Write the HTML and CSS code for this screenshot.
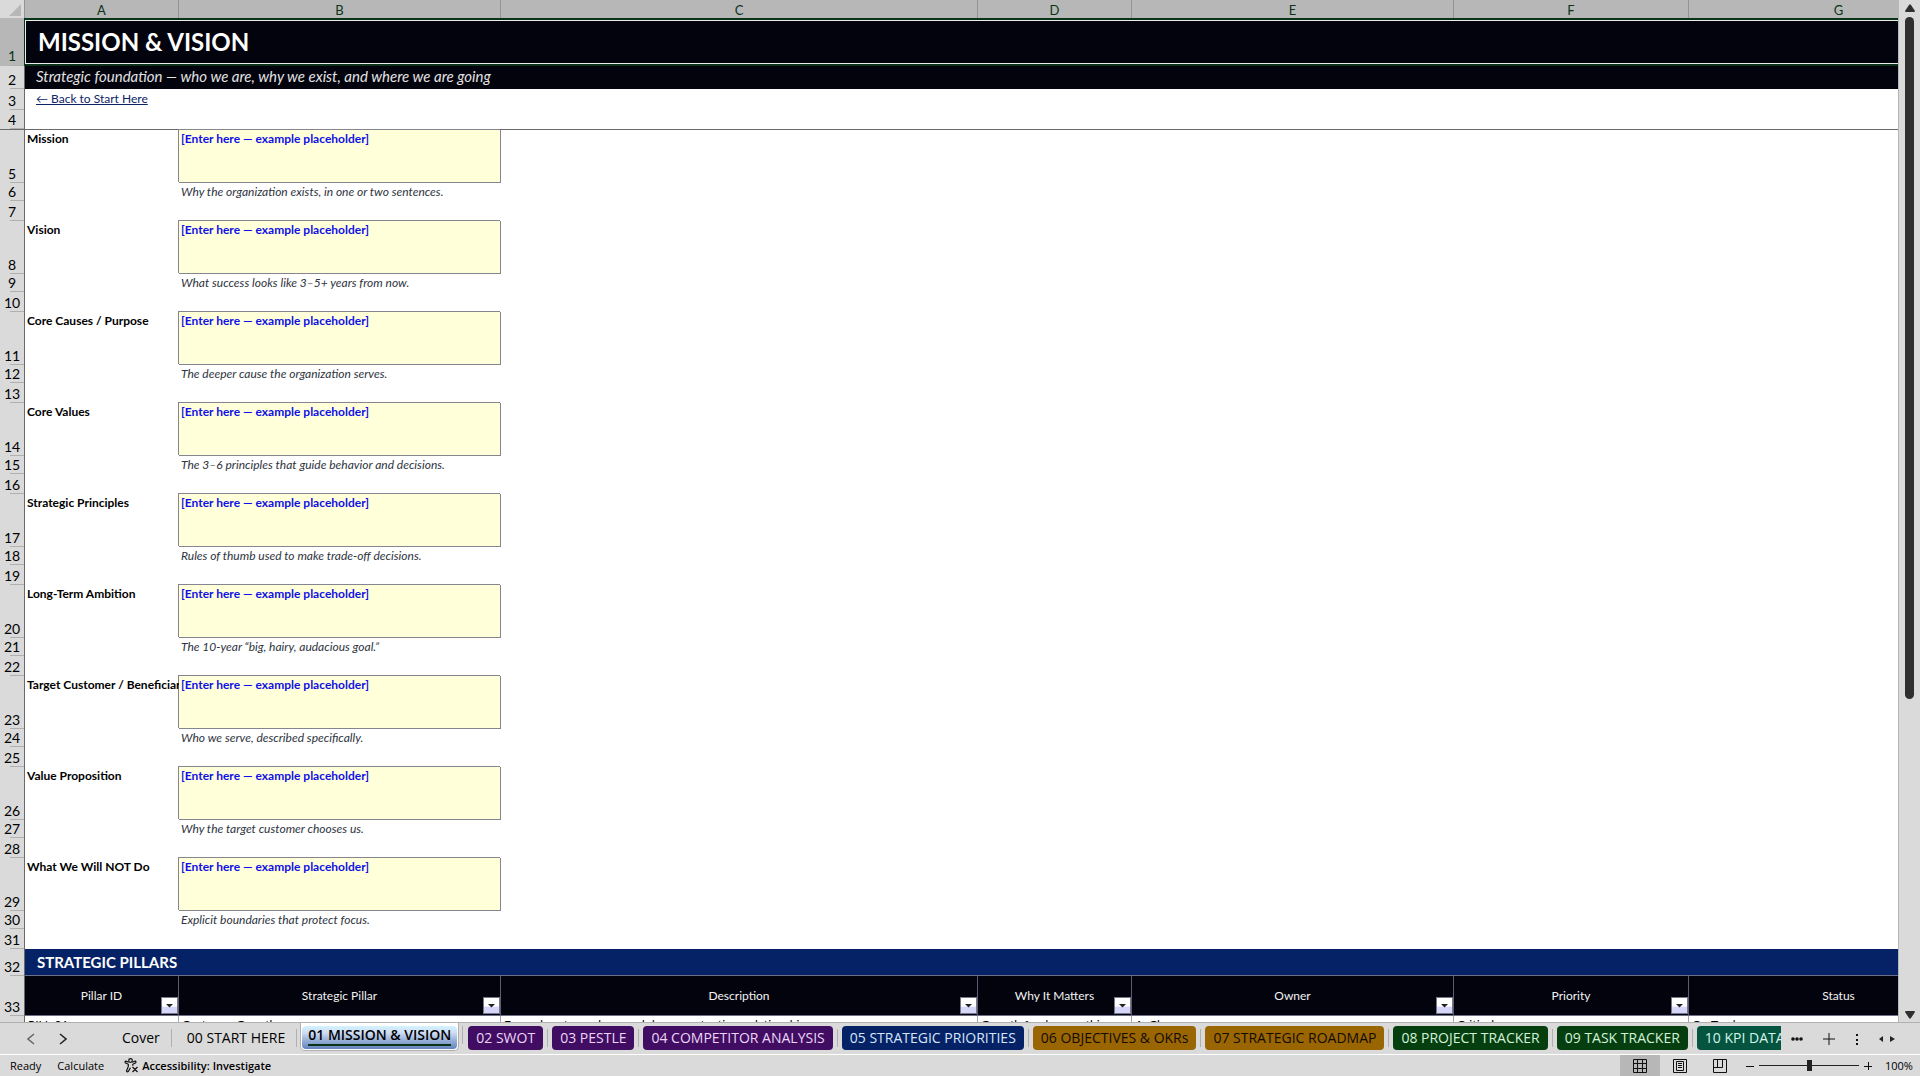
FILE: index.html
```
<!DOCTYPE html>
<html lang="en">
<head>
    <meta charset="UTF-8">
    <meta name="viewport" content="width=device-width, initial-scale=1.0">
    <title>Mission &amp; Vision</title>
    <link rel="stylesheet" href="styles.css">
</head>
<body>
    <main class="workspace">
        <div class="sheet">
            <table class="grid">
                <colgroup>
                    <col class="col-head"><col class="col-a"><col class="col-b"><col class="col-c"><col class="col-d"><col class="col-e"><col class="col-f"><col class="col-g">
                </colgroup>
                <thead>
                    <tr class="letters">
                        <th class="corner"><svg width="12" height="12" viewBox="0 0 12 12"><path d="M12 0v12H0z" fill="#b7b7b7"/></svg></th>
                        <th>A</th><th>B</th><th>C</th><th>D</th><th>E</th><th>F</th><th>G</th>
                    </tr>
                </thead>
                <tbody>
                    <!-- Frozen rows -->
                    <tr class="row-title"><th class="selected">1</th><td colspan="7"><h1>MISSION &amp; VISION</h1></td></tr>
                    <tr class="row-subtitle"><th>2</th><td colspan="7">Strategic foundation — who we are, why we exist, and where we are going</td></tr>
                    <tr class="row-link"><th>3</th><td colspan="7"><a href="#start">← Back to Start Here</a></td></tr>
                    <tr class="row-frozen"><th>4</th><td colspan="7"></td></tr>

                    <!-- Statements -->
                    <tr class="row-entry"><th>5</th><td class="label">Mission</td><td class="entry">[Enter here — example placeholder]</td></tr>
                    <tr class="row-hint"><th>6</th><td></td><td class="hint">Why the organization exists, in one or two sentences.</td></tr>
                    <tr class="row-gap"><th>7</th></tr>

                    <tr class="row-entry"><th>8</th><td class="label">Vision</td><td class="entry">[Enter here — example placeholder]</td></tr>
                    <tr class="row-hint"><th>9</th><td></td><td class="hint">What success looks like 3–5+ years from now.</td></tr>
                    <tr class="row-gap"><th>10</th></tr>

                    <tr class="row-entry"><th>11</th><td class="label">Core Causes / Purpose</td><td class="entry">[Enter here — example placeholder]</td></tr>
                    <tr class="row-hint"><th>12</th><td></td><td class="hint">The deeper cause the organization serves.</td></tr>
                    <tr class="row-gap"><th>13</th></tr>

                    <tr class="row-entry"><th>14</th><td class="label">Core Values</td><td class="entry">[Enter here — example placeholder]</td></tr>
                    <tr class="row-hint"><th>15</th><td></td><td class="hint">The 3–6 principles that guide behavior and decisions.</td></tr>
                    <tr class="row-gap"><th>16</th></tr>

                    <tr class="row-entry"><th>17</th><td class="label">Strategic Principles</td><td class="entry">[Enter here — example placeholder]</td></tr>
                    <tr class="row-hint"><th>18</th><td></td><td class="hint">Rules of thumb used to make trade-off decisions.</td></tr>
                    <tr class="row-gap"><th>19</th></tr>

                    <tr class="row-entry"><th>20</th><td class="label">Long-Term Ambition</td><td class="entry">[Enter here — example placeholder]</td></tr>
                    <tr class="row-hint"><th>21</th><td></td><td class="hint">The 10-year “big, hairy, audacious goal.”</td></tr>
                    <tr class="row-gap"><th>22</th></tr>

                    <tr class="row-entry"><th>23</th><td class="label">Target Customer / Beneficiary</td><td class="entry">[Enter here — example placeholder]</td></tr>
                    <tr class="row-hint"><th>24</th><td></td><td class="hint">Who we serve, described specifically.</td></tr>
                    <tr class="row-gap"><th>25</th></tr>

                    <tr class="row-entry"><th>26</th><td class="label">Value Proposition</td><td class="entry">[Enter here — example placeholder]</td></tr>
                    <tr class="row-hint"><th>27</th><td></td><td class="hint">Why the target customer chooses us.</td></tr>
                    <tr class="row-gap"><th>28</th></tr>

                    <tr class="row-entry"><th>29</th><td class="label">What We Will NOT Do</td><td class="entry">[Enter here — example placeholder]</td></tr>
                    <tr class="row-hint"><th>30</th><td></td><td class="hint">Explicit boundaries that protect focus.</td></tr>
                    <tr class="row-gap"><th>31</th></tr>

                    <!-- Pillars table -->
                    <tr class="row-section"><th>32</th><td colspan="7">STRATEGIC PILLARS</td></tr>
                    <tr class="row-fields">
                        <th>33</th>
                        <td>Pillar ID<button class="filter" aria-label="Filter Pillar ID"></button></td>
                        <td>Strategic Pillar<button class="filter" aria-label="Filter Strategic Pillar"></button></td>
                        <td>Description<button class="filter" aria-label="Filter Description"></button></td>
                        <td>Why It Matters<button class="filter" aria-label="Filter Why It Matters"></button></td>
                        <td>Owner<button class="filter" aria-label="Filter Owner"></button></td>
                        <td>Priority<button class="filter" aria-label="Filter Priority"></button></td>
                        <td>Status<button class="filter" aria-label="Filter Status"></button></td>
                    </tr>
                    <tr class="row-data"><th></th><td>PILL-01</td><td>Customer Growth</td><td>Expand customer base and deepen retention, relationships</td><td>Growth funds everything</td><td>A. Chen</td><td>Critical</td><td>On Track</td></tr>
                </tbody>
            </table>
        </div>
        <div class="scrollbar">
            <svg width="10" height="8" viewBox="0 0 10 8"><path d="M4 1q1-1.500 2 0l4 6q0 1-1 1H1Q0 8 0 7z" fill="#2f2f2f"/></svg>
            <div class="track"><div class="thumb"></div></div>
            <svg width="10" height="8" viewBox="0 0 10 8"><path d="M4 7q1 1.500 2 0l4-6Q10 0 9 0H1Q0 0 0 1z" fill="#2f2f2f"/></svg>
        </div>
    </main>

    <nav class="tabbar">
        <div class="arrows">
            <button aria-label="Previous sheet"><svg width="8" height="12" viewBox="0 0 8 12"><path d="M7 1L1 6l6 5" fill="none" stroke="#666" stroke-width="1.500"/></svg></button>
            <button aria-label="Next sheet"><svg width="8" height="12" viewBox="0 0 8 12"><path d="M1 1l6 5-6 5" fill="none" stroke="#222" stroke-width="1.500"/></svg></button>
        </div>
        <div class="tabs">
            <button class="tab plain">Cover</button>
            <button class="tab plain">00 START HERE</button>
            <button class="tab active"><span>01 MISSION &amp; VISION</span></button>
            <button class="tab purple">02 SWOT</button>
            <button class="tab purple">03 PESTLE</button>
            <button class="tab purple">04 COMPETITOR ANALYSIS</button>
            <button class="tab blue">05 STRATEGIC PRIORITIES</button>
            <button class="tab gold">06 OBJECTIVES &amp; OKRs</button>
            <button class="tab gold">07 STRATEGIC ROADMAP</button>
            <button class="tab green">08 PROJECT TRACKER</button>
            <button class="tab green">09 TASK TRACKER</button>
            <button class="tab teal">10 KPI DATABASE</button>
        </div>
        <div class="tab-tools">
            <button aria-label="More sheets"><svg width="12" height="12" viewBox="0 0 12 12" fill="#111"><circle cx="2" cy="6" r="1.800"/><circle cx="6" cy="6" r="1.800"/><circle cx="10" cy="6" r="1.800"/></svg></button>
            <button aria-label="New sheet"><svg width="12" height="12" viewBox="0 0 12 12"><path d="M6 0v12M0 6h12" stroke="#111"/></svg></button>
            <button aria-label="Resize tabs"><svg width="4" height="12" viewBox="0 0 4 12" fill="#111"><path d="M1 1h2v2H1zM1 6h2v2H1zM1 10h2v2H1z"/></svg></button>
            <button aria-label="Scroll sideways"><svg width="16" height="8" viewBox="0 0 16 8" fill="#222"><path d="M4 1v6L0 4zM11 1v6l5-3z"/></svg></button>
        </div>
    </nav>

    <footer class="status">
        <span>Ready</span>
        <span>Calculate</span>
        <button class="access">
            <svg width="15" height="15" viewBox="0 0 15 15" fill="none" stroke="#111" stroke-width="1.200"><circle cx="6.500" cy="2.500" r="1.800"/><path d="M4.800 4.300L2 3.200Q.5 3.500 1.300 4.700L4.300 6.300v2.200L2.500 13q.5 1.500 1.700.6L6.500 9.800M8.200 4.300L11 3.200q1.500.3.700 1.500L8.800 6.300v1.500M8.500 9l5 5M13.500 9l-5 5"/></svg>
            Accessibility: Investigate
        </button>
        <div class="views">
            <button class="view on" aria-label="Normal view"><svg width="14" height="14" viewBox="0 0 14 14"><path d="M.5.5h13v13H.5zM.5 4.500h13M.5 9.500h13M4.500.5v13M9.500.5v13" fill="none" stroke="#111"/></svg></button>
            <button class="view" aria-label="Page layout view"><svg width="14" height="14" viewBox="0 0 14 14"><path d="M.5.5h13v13H.5zM3.500 2.500h7v9h-7zM5 4.500h4M5 6.500h4M5 8.500h4" fill="none" stroke="#111"/></svg></button>
            <button class="view" aria-label="Page break view"><svg width="14" height="14" viewBox="0 0 14 14"><path d="M.5.5h13v13H.5zM4.500.5v8M9.500.5v8M.5 8.500h9" fill="none" stroke="#111"/></svg></button>
        </div>
        <div class="zoom">
            <button aria-label="Zoom out"><svg width="8" height="8" viewBox="0 0 8 8"><path d="M0 4.500h8" stroke="#111"/></svg></button>
            <input type="range" min="0" max="100" value="50" aria-label="Zoom">
            <button aria-label="Zoom in"><svg width="8" height="8" viewBox="0 0 8 8"><path d="M0 4.500h8M4.500 0v8" stroke="#111"/></svg></button>
        </div>
        <span class="percent">100%</span>
    </footer>
</body>
</html>
```
FILE: styles.css
```
* {
    margin: 0;
    padding: 0;
    box-sizing: border-box;
}

body {
    height: 100vh;
    display: flex;
    flex-direction: column;
    overflow: hidden;
    background: #fff;
    color: #000;
    font-family: Lato, Carlito, Calibri, sans-serif;
    font-size: 12px;
}

button {
    border: none;
    background: none;
    font: inherit;
    color: inherit;
}

svg {
    display: block;
}

/* Sheet */
.workspace {
    flex: 1;
    min-height: 0;
    display: flex;
}

.sheet {
    flex: 1;
    min-width: 0;
    overflow: hidden;
}

.grid {
    width: 1989px;
    table-layout: fixed;
    border-collapse: separate;
    border-spacing: 0;
    line-height: 16px;
}

.col-head { width: 25px; }
.col-a { width: 154px; }
.col-b { width: 322px; }
.col-c { width: 477px; }
.col-d { width: 154px; }
.col-e { width: 322px; }
.col-f { width: 235px; }
.col-g { width: 300px; }

.grid td {
    padding: 0 3px;
    white-space: nowrap;
    overflow: hidden;
    vertical-align: top;
}

.letters th {
    height: 18px;
    background: #b7b7b7;
    border-right: 1px solid #93939b;
    color: #0a3319;
    font-size: 13px;
    font-weight: 400;
    vertical-align: bottom;
}

.letters .corner {
    background: #dadada;
    padding: 0 0 2px 9px;
}

/* Row numbers, with a short tick under each one */
tbody th {
    background: linear-gradient(#b0b0b0, #b0b0b0) right bottom / 14px 1px no-repeat #dadada;
    border-right: 1px solid #6a6a6a;
    padding-bottom: 1px;
    font-size: 14px;
    font-weight: 400;
    vertical-align: bottom;
}

tbody .selected {
    background-color: #b7b7b7;
    padding-bottom: 2px;
    color: #0a3319;
    border-right-color: #0a3319;
}

.row-title { height: 48px; }

.row-title td {
    padding: 0 13px;
    background: #03030d;
    border: 2px solid #0a3319;
    border-width: 2px 0;
    box-shadow: inset 0 0 0 1px #e8efe8;
    vertical-align: middle;
    color: #fff;
}

.row-title h1 {
    font-size: 24px;
    line-height: 32px;
    font-weight: 700;
}

.row-subtitle { height: 23px; }

.row-subtitle td {
    padding: 0 11px;
    background: #03030d;
    color: #e2e2e2;
    font-size: 15px;
    line-height: 20px;
    font-style: italic;
}

.row-link { height: 21px; }

.row-link td {
    padding: 2px 11px;
}

.row-link a {
    color: #0a2466;
}

.row-frozen { height: 20px; }

.row-frozen th,
.row-frozen td {
    border-bottom: 1px solid #6a6a6a;
}

.row-entry { height: 53px; }
.row-hint { height: 18px; }
.row-gap { height: 20px; }

.grid .label,
.grid .entry {
    padding: 1px 2px 0;
    font-weight: 700;
}

.grid .entry {
    background: #ffffd9;
    color: #1010e8;
    border: 1px solid #85858f;
    border-width: 0 1px 1px 0;
    box-shadow: -1px -1px 0 #85858f;
}

.grid .hint {
    padding: 1px 2px 0;
    color: #2e3440;
    font-style: italic;
}

.row-section { height: 27px; }

.row-section td {
    padding: 0 12px;
    background: #062266;
    border-bottom: 1px solid #6e6e88;
    vertical-align: middle;
    color: #fff;
    font-size: 15px;
    font-weight: 700;
}

.row-fields { height: 40px; }

.grid .row-fields td {
    position: relative;
    background: #03030d;
    border-right: 1px solid #5c5c72;
    border-bottom: 1px solid #6e6e88;
    vertical-align: middle;
    text-align: center;
    color: #f2f2f2;
}

.filter {
    position: absolute;
    right: 0;
    bottom: 1px;
    width: 17px;
    height: 17px;
    display: flex;
    align-items: center;
    justify-content: center;
    border: 1px solid #77778a;
    background: linear-gradient(#fff 55%, #d6d6fb 60%);
}

.filter::after {
    content: "";
    width: 8px;
    height: 4px;
    background: #222;
    clip-path: polygon(0 0, 100% 0, 50% 100%);
}

.row-data { height: 24px; }

.grid .row-data td {
    padding-top: 1px;
    border-right: 1px solid #a5a5b5;
}

/* Scrollbar */
.scrollbar {
    width: 22px;
    padding: 4px 0 3px;
    display: flex;
    flex-direction: column;
    align-items: center;
    gap: 5px;
    background: #dadada;
    border-left: 1px solid #b7b7b7;
}

.track {
    flex: 1;
}

.thumb {
    width: 9px;
    height: 69%;
    border-radius: 5px;
    background: #2f2f2f;
}

/* Sheet tabs */
.tabbar {
    height: 33px;
    display: flex;
    background: #dadada;
    border-top: 1px solid #b0b0b0;
    border-bottom: 1px solid #fff;
    font-family: "Open Sans", "Segoe UI", sans-serif;
    font-size: 14px;
}

.arrows {
    width: 110px;
    display: flex;
    align-items: center;
    gap: 24px;
    padding-left: 27px;
}

.tabs {
    flex: 1;
    min-width: 0;
    display: flex;
    overflow: hidden;
}

.tab {
    position: relative;
    flex: none;
    height: 24px;
    margin: 3px 9px 0 0;
    padding: 0 8px;
    border-radius: 4px;
    line-height: 24px;
    white-space: nowrap;
}

.tab::after {
    content: "";
    position: absolute;
    top: 3px;
    right: -5px;
    width: 1px;
    height: 18px;
    background: #b0b0b0;
}

.tab.plain {
    margin-right: 3px;
    padding: 0 12px;
}

.tab.plain::after {
    right: 0;
}

.tab.active {
    height: 28px;
    margin-top: 0;
    padding: 3px 1px 1px;
    background: #fff;
    border: 1px solid #b0b0b0;
    border-top: none;
    border-radius: 0 0 5px 5px;
    font-weight: 600;
}

.tab.active span {
    display: block;
    height: 23px;
    padding: 0 6px;
    border-radius: 4px;
    background: linear-gradient(#d3f3ff, #cfdcf5 30%, #a3b9dc 55%, #6382bd);
    line-height: 17px;
}

.tab.active span::after {
    content: "";
    display: block;
    height: 2px;
    margin-top: 1px;
    background: #0a3319;
}

.purple { background: #400d63; color: #ecd6f5; }
.blue { background: #062266; color: #d5e5fa; }
.gold { background: #9a6503; color: #120c00; font-weight: 500; }
.green { background: #053f10; color: #d3f0d8; }
.teal { background: #04543f; color: #d3f5ea; }

.tab-tools {
    width: 139px;
    display: flex;
    align-items: center;
    justify-content: space-between;
    padding: 0 25px 0 10px;
}

/* Status bar */
.status {
    height: 21px;
    display: flex;
    align-items: center;
    padding-left: 10px;
    background: #dadada;
    font-family: "Open Sans", "Segoe UI", sans-serif;
    font-size: 11px;
    gap: 16px;
}

.access {
    display: flex;
    align-items: center;
    gap: 3px;
    margin-left: 4px;
    font-weight: 600;
}

.views {
    display: flex;
    align-self: stretch;
    margin-left: auto;
}

.view {
    width: 40px;
    display: flex;
    align-items: center;
    justify-content: center;
}

.view.on {
    background: #b7b7b7;
}

.zoom {
    display: flex;
    align-items: center;
    gap: 5px;
    margin: 0 -3px 0 -10px;
}

.zoom input {
    width: 100px;
    height: 12px;
    appearance: none;
    background: linear-gradient(#222, #222) center / 100% 1px no-repeat;
}

.zoom input::-webkit-slider-thumb {
    appearance: none;
    width: 5px;
    height: 11px;
    background: #222;
}

.percent {
    width: 35px;
}
```
